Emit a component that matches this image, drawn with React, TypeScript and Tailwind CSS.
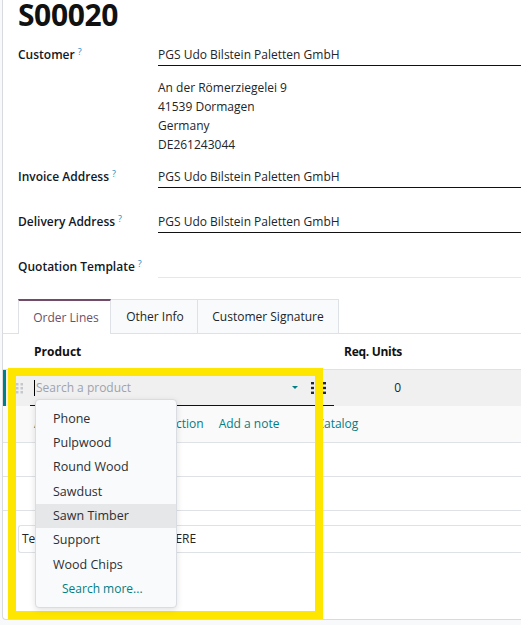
import React from "react";

function Label({ text }: { text: string }) {
  return (
    <div className="w-[140px] shrink-0 h-[22px] leading-[21px] font-semibold text-[#111827]">
      {text}
      <sup className="ml-[3px] text-[9px] font-normal text-[#1d8cc0]">?</sup>
    </div>
  );
}

function Field({ value, light }: { value?: string; light?: boolean }) {
  return (
    <div
      className={
        "flex-1 h-[22px] leading-[21px] border-b " +
        (light ? "border-[#e5e7eb]" : "border-[#111111]")
      }
    >
      {value}
    </div>
  );
}

function ListIcon() {
  return (
    <svg width="15" height="12" viewBox="0 0 15 12" className="shrink-0">
      <rect x="0" y="0" width="3" height="2.4" fill="#1f2937" />
      <rect x="5" y="0" width="10" height="2.4" fill="#1f2937" />
      <rect x="0" y="4.8" width="3" height="2.4" fill="#1f2937" />
      <rect x="5" y="4.8" width="10" height="2.4" fill="#1f2937" />
      <rect x="0" y="9.6" width="3" height="2.4" fill="#1f2937" />
      <rect x="5" y="9.6" width="10" height="2.4" fill="#1f2937" />
    </svg>
  );
}

function Handle() {
  return (
    <svg width="7" height="11" viewBox="0 0 7 11" className="shrink-0">
      {[0, 4, 8].map((y) => (
        <React.Fragment key={y}>
          <rect x="0" y={y} width="2.5" height="2.5" fill="#c4c8cc" />
          <rect x="4.5" y={y} width="2.5" height="2.5" fill="#c4c8cc" />
        </React.Fragment>
      ))}
    </svg>
  );
}

export default function App() {
  const items = ["Phone", "Pulpwood", "Round Wood", "Sawdust", "Sawn Timber", "Support", "Wood Chips"];
  return (
    <div className="relative w-[521px] h-[625px] overflow-hidden bg-[#f8f9fa] font-['Open_Sans',sans-serif] text-[12px] text-[#212529]">
      <div className="ml-[2px] h-[620px] bg-white border-l border-b border-[#d8dadd] rounded-bl-[4px] flex flex-col">
        <div className="pl-[15px] flex flex-col">
          <h1 className="h-[30px] text-[30px] leading-[30px] font-bold tracking-[-0.4px] text-[#111]">S00020</h1>
          <div className="mt-[14px] flex">
            <Label text="Customer" />
            <Field value="PGS Udo Bilstein Paletten GmbH" />
          </div>
          <div className="mt-[12px] pl-[140px] flex flex-col leading-[19px]">
            <div>An der Römerziegelei 9</div>
            <div>41539 Dormagen</div>
            <div>Germany</div>
            <div>DE261243044</div>
          </div>
          <div className="mt-[12px] flex">
            <Label text="Invoice Address" />
            <Field value="PGS Udo Bilstein Paletten GmbH" />
          </div>
          <div className="mt-[23px] flex">
            <Label text="Delivery Address" />
            <Field value="PGS Udo Bilstein Paletten GmbH" />
          </div>
          <div className="mt-[23px] flex">
            <Label text="Quotation Template" />
            <Field light />
          </div>
        </div>

        {/* tabs */}
        <div className="mt-[21px] flex pl-[15px] border-b border-[#dee2e6] h-[35px]">
          <div className="w-[93px] h-[35px] -mb-px bg-white border-t-2 border-t-[#714b67] border-x border-x-[#dee2e6] flex items-center justify-center pl-[3px] text-[#6d5068]">
            Order Lines
          </div>
          <div className="w-[87px] h-[34px] bg-[#f9fafb] border-t border-r border-[#dee2e6] flex items-center justify-center pl-[2px]">
            Other Info
          </div>
          <div className="w-[141px] h-[34px] bg-[#f9fafb] border-t border-r border-[#dee2e6] flex items-center justify-center">
            Customer Signature
          </div>
        </div>

        {/* header */}
        <div className="flex items-center h-[36px] border-b border-[#dee2e6] font-bold text-[#111]">
          <div className="w-[327px] pl-[31px]">Product</div>
          <div className="w-[72px] text-right tracking-[-0.3px]">Req. Units</div>
        </div>

        {/* row 1 */}
        <div className="flex h-[36px] bg-[#f0f0f0] border-l-[3px] border-[#017e84]">
          <div className="ml-[10px] flex items-center">
            <Handle />
          </div>
          <div className="ml-[7px] w-[304px] h-full flex items-center border-b border-[#111]">
            <span className="ml-[4px] w-px h-[16px] bg-black" />
            <span className="ml-px text-[#9ca3af] text-[12px]">Search a product</span>
            <svg width="6" height="3" viewBox="0 0 6 3" className="ml-auto mr-[13px]">
              <path d="M0 0 L6 0 L3 3 Z" fill="#017e84" />
            </svg>
            <div className="mr-[8px]">
              <ListIcon />
            </div>
          </div>
          <div className="w-[67px] flex items-center justify-end">0</div>
        </div>

        {/* row 2 */}
        <div className="flex items-center h-[37px] bg-[#fafafa] border-b border-[#dee2e6] pl-[31px] text-[#017e84] text-[12px]">
          <span>Add a product</span>
          <span className="ml-[15px]">Add a section</span>
          <span className="ml-[15px]">Add a note</span>
          <span className="ml-[37px]">Catalog</span>
        </div>
        <div className="h-[34px] border-b border-[#dee2e6]" />
        <div className="h-[34px] border-b border-[#dee2e6]" />

        <div className="mt-[14px] ml-[15px] h-[28px] border border-r-0 border-[#dee2e6] rounded-l-[3px] flex items-center pl-[3px] text-[12px]">
          Terms &amp; Conditions: ADD HERE
        </div>
      </div>

      {/* yellow highlight */}
      <div className="absolute left-[8px] top-[368px] w-[315px] h-[251px] border-[8px] border-[#ffe600]" />

      {/* dropdown */}
      <div className="absolute left-[35px] top-[399px] w-[142px] h-[209px] bg-[#f9fafb] border border-[#d9dce0] rounded-[4px] shadow-[0_2px_6px_rgba(0,0,0,0.12)] pt-[7px] text-[12.5px] text-[#2b2f33]">
        {items.map((it) => (
          <div
            key={it}
            className={"h-[24.3px] flex items-center pl-[17px] " + (it === "Sawn Timber" ? "bg-[#e6e7e9]" : "")}
          >
            {it}
          </div>
        ))}
        <div className="h-[24.3px] flex items-center pl-[26px] text-[12px] text-[#017e84]">Search more...</div>
      </div>
    </div>
  );
}
